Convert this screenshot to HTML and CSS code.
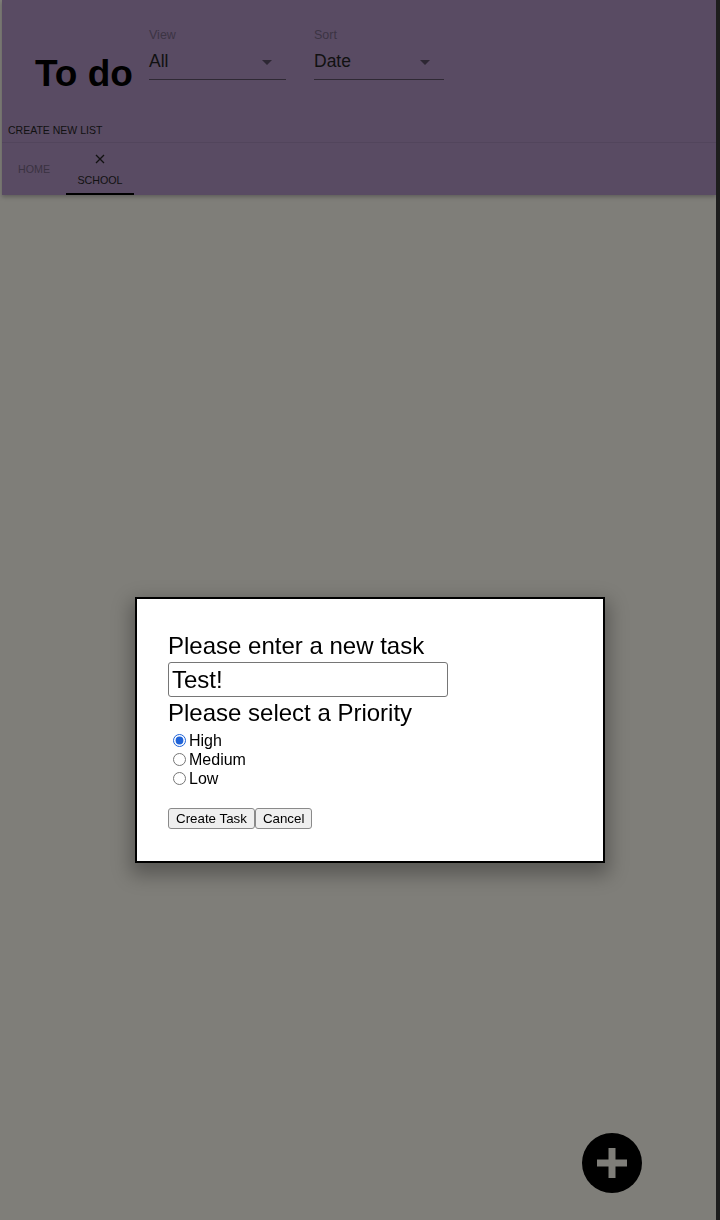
FILE: index.html
```html
<!DOCTYPE html>
<html lang="en">
<head>
<meta charset="utf-8">
<title>To do</title>
<link rel="stylesheet" href="styles.css">
</head>
<body>
<div class="screen">
  <div class="app">
    <header class="appbar">
      <div class="toolbar">
        <h1 class="title">To do</h1>
        <div class="field field-view">
          <span class="field-label">View</span>
          <div class="select"><span class="select-value">All</span><span class="caret"></span></div>
        </div>
        <div class="field field-sort">
          <span class="field-label">Sort</span>
          <div class="select"><span class="select-value">Date</span><span class="caret"></span></div>
        </div>
      </div>
      <button class="create-list">Create new list</button>
      <nav class="tabs">
        <div class="tab tab-home"><span class="tab-text">Home</span></div>
        <div class="tab tab-active">
          <svg class="tab-close" width="10" height="10" viewBox="0 0 10 10"><path d="M1 1 L9 9 M9 1 L1 9" stroke="#111" stroke-width="1.3" fill="none"/></svg>
          <span class="tab-text">School</span>
          <span class="indicator"></span>
        </div>
      </nav>
    </header>
  </div>
  <div class="edge"></div>
</div>

<div class="modal">
  <div class="modal-label">Please enter a new task</div>
  <input class="task-input" type="text" value="Test!">
  <div class="modal-label">Please select a Priority</div>
  <div class="priorities">
    <label class="radio-row"><input type="radio" name="priority" checked><span>High</span></label>
    <label class="radio-row"><input type="radio" name="priority"><span>Medium</span></label>
    <label class="radio-row"><input type="radio" name="priority"><span>Low</span></label>
  </div>
  <div class="actions">
    <button class="btn">Create Task</button>
    <button class="btn">Cancel</button>
  </div>
</div>

<button class="fab" aria-label="Add">
  <svg width="60" height="60" viewBox="0 0 60 60">
    <circle cx="30" cy="30" r="30" fill="#000"/>
    <rect x="15" y="26.5" width="30" height="7" fill="#7f7e79"/>
    <rect x="26.5" y="15" width="7" height="30" fill="#7f7e79"/>
  </svg>
</button>
</body>
</html>
```

FILE: styles.css
```css
* { box-sizing: border-box; }

html, body {
  margin: 0;
  padding: 0;
}

body {
  background: #7f7e79;
  font-family: "Liberation Sans", Arial, sans-serif;
  color: #000;
  width: 720px;
  height: 1220px;
  overflow: hidden;
}

.screen {
  display: flex;
  min-height: 1220px;
}

.app {
  flex: 1;
  padding-left: 2px;
}

.edge {
  width: 4px;
  background: #1d1d1d;
}

.appbar {
  background: #594b63;
  box-shadow: 0 2px 4px rgba(0, 0, 0, 0.25);
  display: flex;
  flex-direction: column;
}

.toolbar {
  display: flex;
  align-items: flex-start;
  padding: 28px 0 0 33px;
}

.title {
  margin: 26px 0 0 0;
  width: 114px;
  font-size: 37px;
  line-height: 40px;
  font-weight: bold;
  color: #000;
}

.field {
  display: flex;
  flex-direction: column;
}

.field-view { width: 137px; }
.field-sort { width: 130px; margin-left: 28px; }

.field-label {
  font-size: 12.5px;
  line-height: 15px;
  color: #3c3443;
}

.select {
  margin-top: 8px;
  height: 29px;
  padding-bottom: 8px;
  border-bottom: 1px solid #2f2934;
  display: flex;
  justify-content: space-between;
  align-items: flex-start;
}

.select-value {
  font-size: 17.5px;
  line-height: 20px;
  color: #111;
}

.caret {
  margin: 9px 14px 0 0;
  width: 0;
  height: 0;
  border-left: 5px solid transparent;
  border-right: 5px solid transparent;
  border-top: 5px solid #2d2733;
}

.create-list {
  align-self: flex-start;
  margin: 30px 0 6px 0;
  padding: 0 0 0 6px;
  background: none;
  border: 0;
  font-family: "Liberation Sans", Arial, sans-serif;
  font-size: 10.5px;
  line-height: 12px;
  height: 12px;
  text-transform: uppercase;
  color: #111;
}

.tabs {
  display: flex;
  height: 53px;
  border-top: 1px solid rgba(0, 0, 0, 0.07);
}

.tab {
  position: relative;
  display: flex;
  flex-direction: column;
  align-items: center;
  justify-content: center;
  text-transform: uppercase;
  font-size: 10.7px;
  line-height: 12px;
}

.tab-home {
  width: 64px;
  color: #3a3241;
}

.tab-active {
  width: 68px;
  color: #111;
  padding-top: 2px;
}

.tab-close {
  display: block;
  margin-bottom: 10px;
}

.indicator {
  position: absolute;
  left: 0;
  right: 0;
  bottom: 0;
  height: 2px;
  background: #000;
}

/* Modal */
.modal {
  position: fixed;
  left: 135px;
  top: 597px;
  width: 470px;
  background: #fff;
  border: 2px solid #000;
  padding: 34px 31px 32px 31px;
  box-shadow: 0 8px 18px 4px rgba(0, 0, 0, 0.3);
}

.modal-label {
  font-size: 24px;
  line-height: 25px;
  color: #000;
}

.task-input {
  display: block;
  width: 280px;
  height: 35px;
  margin: 4px 0 3px 0;
  padding: 0 3px;
  border: 1px solid #767676;
  border-radius: 3px;
  font-family: "Liberation Sans", Arial, sans-serif;
  font-size: 24px;
  color: #000;
  background: #fff;
}

.priorities {
  margin-top: 6px;
  display: flex;
  flex-direction: column;
}

.radio-row {
  display: flex;
  align-items: center;
  height: 19px;
  font-size: 16px;
  line-height: 19px;
}

.radio-row input {
  margin: 0 3px 0 5px;
  width: 13px;
  height: 13px;
  accent-color: #1f63d8;
}

.actions {
  display: flex;
  margin-top: 20px;
}

.btn {
  height: 21px;
  padding: 0 7px;
  border: 1px solid #8a8a8a;
  border-radius: 3px;
  background: #efefef;
  font-family: "Liberation Sans", Arial, sans-serif;
  font-size: 13.33px;
  color: #000;
  line-height: 19px;
}

.fab {
  position: fixed;
  left: 582px;
  top: 1133px;
  width: 60px;
  height: 60px;
  padding: 0;
  border: 0;
  background: none;
}

.fab svg { display: block; }
```
